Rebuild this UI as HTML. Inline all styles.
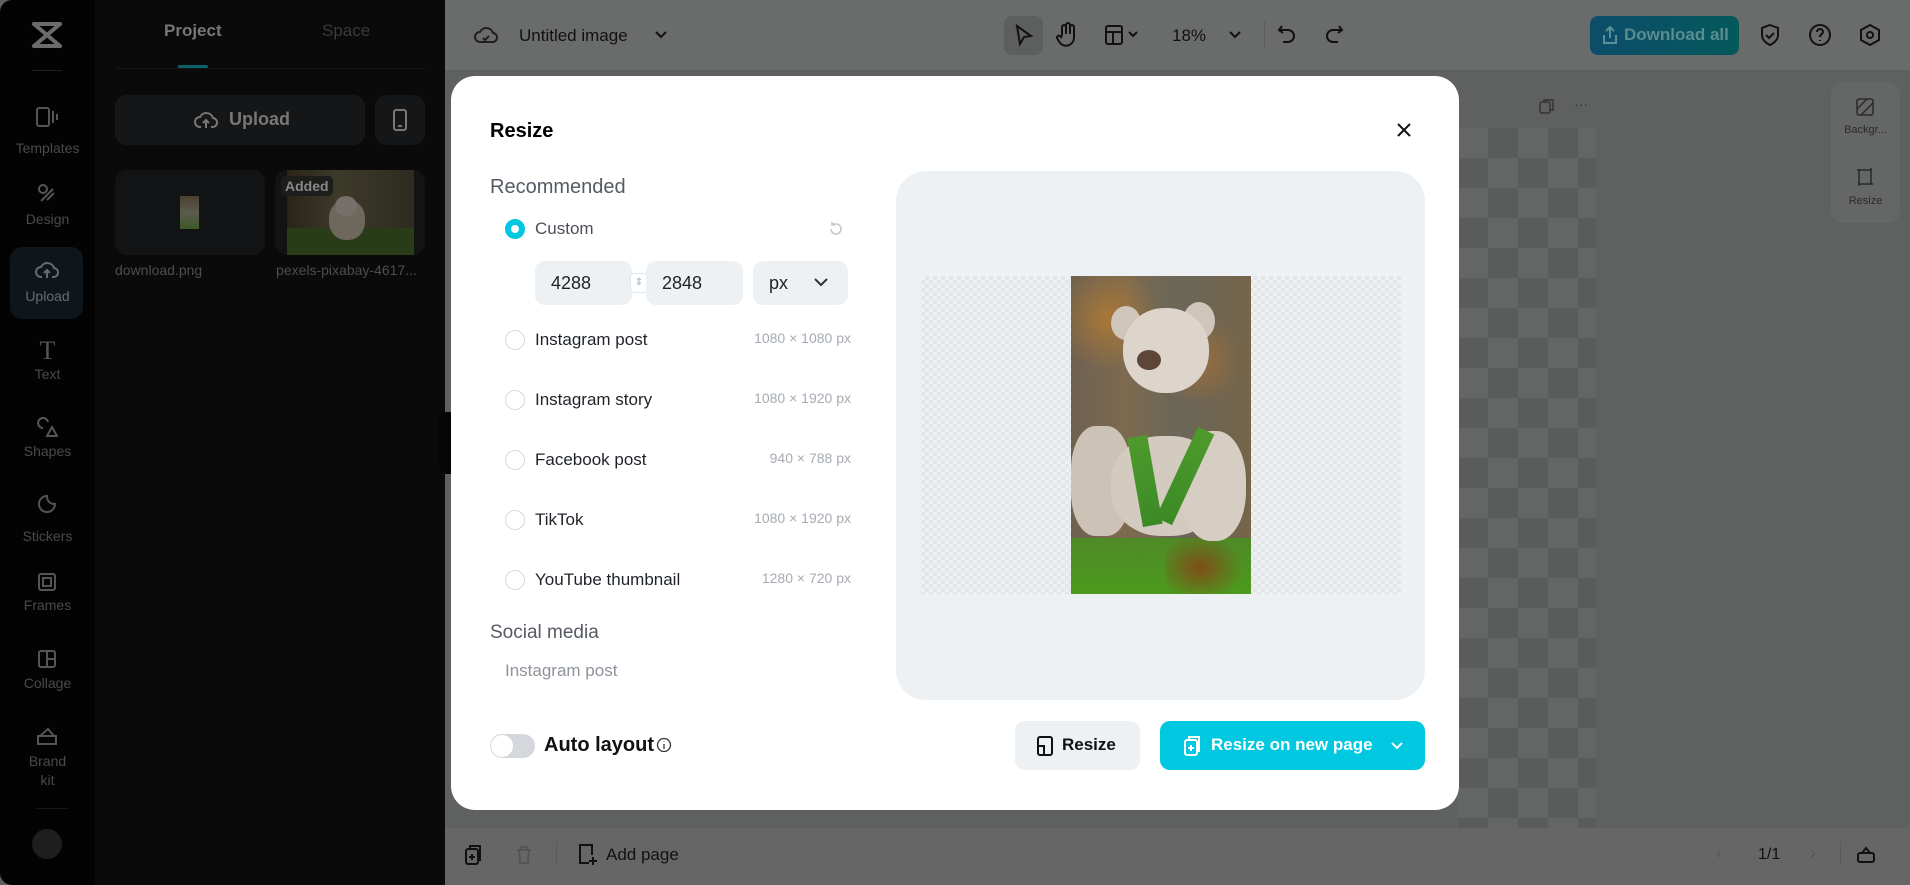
<!DOCTYPE html>
<html><head><meta charset="utf-8"><style>
*{box-sizing:border-box;margin:0;padding:0}
body{width:1910px;height:885px;overflow:hidden;background:#5f6060;font-family:"Liberation Sans",sans-serif;position:relative}
.a{position:absolute}
.rail{left:0;top:0;width:95px;height:885px;background:#030303;border-radius:12px 0 0 12px}
.panel{left:95px;top:0;width:350px;height:885px;background:#0a0a0a}
.ri{position:absolute;left:0;width:95px;text-align:center;color:#4a4a4a;font-size:14px}
.top{left:445px;top:0;width:1465px;height:70px;background:#6a6b6b}
.bot{left:445px;top:828px;width:1465px;height:57px;background:#666}
.ic{position:absolute}
.modal{left:451px;top:76px;width:1008px;height:734px;background:#fff;border-radius:24px}
.lbl{position:absolute;font-size:17px;color:#1f2329}
.rad{position:absolute;left:505px;width:20px;height:20px;border-radius:50%;border:1.5px solid #d5d9de}
.inp{position:absolute;top:261px;height:44px;background:#eef1f4;border-radius:10px;font-size:18px;color:#1f2329;line-height:44px;padding-left:16px}
.sz{position:absolute;left:700px;width:151px;text-align:right;font-size:14px;color:#a6abb3}
</style></head><body>
<div class="a rail"></div>
<div class="a panel"></div>
<svg class="ic" style="left:30px;top:20px" width="34" height="30" viewBox="0 0 34 30" fill="none" stroke="#6c6c6c" stroke-width="4" stroke-linecap="round"><path d="M4 4h26M4 26h26M4 4l26 22M30 4L4 26"/></svg>
<div class="a" style="left:32px;top:70px;width:30px;height:1px;background:#222"></div>
<svg class="ic" style="left:36px;top:106px" width="22" height="22" fill="none" stroke="#555" stroke-width="2"><rect x="1" y="2" width="12" height="18" rx="2"/><path d="M17 5v12M21 8v6"/></svg>
<div class="ri" style="top:140px">Templates</div>
<svg class="ic" style="left:37px;top:183px" width="20" height="20" fill="none" stroke="#555" stroke-width="2"><circle cx="6" cy="6" r="4"/><path d="M4 18l12-12M10 17l7-7"/></svg>
<div class="ri" style="top:211px">Design</div>
<div class="a" style="left:10px;top:247px;width:73px;height:72px;background:#0f161b;border-radius:12px"></div>
<svg class="ic" style="left:35px;top:260px" width="24" height="20" fill="none" stroke="#6a6a6a" stroke-width="2"><path d="M7 17H6a5 5 0 010-10 7 7 0 0113 1 4 4 0 01-1 9h-1M12 18v-8M9 13l3-3 3 3"/></svg>
<div class="ri" style="top:288px;color:#6a6a6a">Upload</div>
<div class="ri" style="top:336px;font-size:26px;font-family:'Liberation Serif',serif;color:#555">T</div>
<div class="ri" style="top:366px">Text</div>
<svg class="ic" style="left:36px;top:416px" width="22" height="22" fill="none" stroke="#555" stroke-width="2"><path d="M7 12a5 5 0 115-6M11 20l5-9 5 9z"/></svg>
<div class="ri" style="top:443px">Shapes</div>
<svg class="ic" style="left:36px;top:493px" width="22" height="22" fill="none" stroke="#555" stroke-width="2"><path d="M19 11a8 8 0 11-8-8c0 5 3 8 8 8z"/></svg>
<div class="ri" style="top:528px">Stickers</div>
<svg class="ic" style="left:37px;top:572px" width="20" height="20" fill="none" stroke="#555" stroke-width="2"><rect x="2" y="2" width="16" height="16" rx="2"/><rect x="6" y="6" width="8" height="8"/></svg>
<div class="ri" style="top:597px">Frames</div>
<svg class="ic" style="left:37px;top:649px" width="20" height="20" fill="none" stroke="#555" stroke-width="2"><rect x="2" y="2" width="16" height="16" rx="2"/><path d="M10 2v16M10 10h8"/></svg>
<div class="ri" style="top:675px">Collage</div>
<svg class="ic" style="left:36px;top:726px" width="22" height="20" fill="none" stroke="#555" stroke-width="2"><path d="M2 10h18v8H2zM4 10l8-7 6 7"/></svg>
<div class="ri" style="top:752px;line-height:19px">Brand<br>kit</div>
<div class="a" style="left:37px;top:808px;width:30px;height:1px;background:#1a1a1a"></div>
<div class="a" style="left:32px;top:829px;width:30px;height:30px;border-radius:50%;background:#1e1e1e"></div>
<div class="a" style="left:164px;top:21px;font-size:17px;font-weight:bold;color:#777">Project</div>
<div class="a" style="left:322px;top:21px;font-size:17px;color:#3a3a3a">Space</div>
<div class="a" style="left:115px;top:68px;width:310px;height:1px;background:#161616"></div>
<div class="a" style="left:178px;top:65px;width:30px;height:3px;border-radius:2px;background:#0b6168"></div>
<div class="a" style="left:115px;top:95px;width:250px;height:50px;border-radius:12px;background:#141618"></div>
<svg class="ic" style="left:194px;top:110px" width="24" height="20" fill="none" stroke="#777" stroke-width="2"><path d="M7 17H6a5 5 0 010-10 7 7 0 0113 1 4 4 0 01-1 9h-1M12 18v-8M9 13l3-3 3 3"/></svg>
<div class="a" style="left:229px;top:109px;font-size:18px;font-weight:bold;color:#777">Upload</div>
<div class="a" style="left:375px;top:95px;width:50px;height:50px;border-radius:12px;background:#141618"></div>
<svg class="ic" style="left:392px;top:108px" width="16" height="24" fill="none" stroke="#777" stroke-width="2"><rect x="2" y="2" width="12" height="20" rx="2"/><path d="M6 18h4"/></svg>
<div class="a" style="left:115px;top:170px;width:150px;height:85px;border-radius:12px;background:#111314"></div>
<div class="a" style="left:180px;top:196px;width:19px;height:33px;background:linear-gradient(#4a4030,#5c5a50 50%,#3c5a25)"></div>
<div class="a" style="left:275px;top:170px;width:150px;height:85px;border-radius:12px;background:#111314"></div>
<div class="a" style="left:287px;top:170px;width:127px;height:85px;background:linear-gradient(90deg,#2a2417,#3d3a2a 40%,#2e2b20);overflow:hidden">
<div class="a" style="left:0;top:58px;width:127px;height:27px;background:#283d17"></div>
<div class="a" style="left:42px;top:30px;width:36px;height:40px;border-radius:45%;background:#6d675c"></div>
<div class="a" style="left:48px;top:26px;width:22px;height:20px;border-radius:50%;background:#76706a"></div></div>
<div class="a" style="left:281px;top:176px;padding:2px 4px;background:#1d1d1b;border-radius:5px;font-size:14px;font-weight:bold;color:#888">Added</div>
<div class="a" style="left:115px;top:262px;font-size:14px;color:#4d4d4d">download.png</div>
<div class="a" style="left:276px;top:262px;font-size:14px;color:#4d4d4d">pexels-pixabay-4617...</div>
<div class="a" style="left:439px;top:412px;width:12px;height:62px;background:#050505;border-radius:8px 0 0 8px"></div>
<div class="a top"></div>
<svg class="ic" style="left:474px;top:25px" width="24" height="20" fill="none" stroke="#1e1e1e" stroke-width="2"><path d="M7 17H6a5 5 0 010-10 7 7 0 0113 1 4 4 0 01-1 9H7z"/><path d="M9 13l2 2 4-4"/></svg>
<div class="a" style="left:519px;top:26px;font-size:17px;color:#111">Untitled image</div>
<svg class="ic" style="left:654px;top:30px" width="14" height="10" fill="none" stroke="#111" stroke-width="2"><path d="M2 2l5 5 5-5"/></svg>
<div class="a" style="left:1004px;top:16px;width:39px;height:39px;border-radius:8px;background:#5d5e5e"></div>
<svg class="ic" style="left:1014px;top:24px" width="20" height="24" fill="none" stroke="#111" stroke-width="2"><path d="M3 2l14 10-7 1-4 7z"/></svg>
<svg class="ic" style="left:1055px;top:22px" width="24" height="26" fill="none" stroke="#111" stroke-width="2"><path d="M7 14V5a2 2 0 014 0v7V3a2 2 0 014 0v9V5a2 2 0 014 0v11a8 8 0 01-14 5l-3-5a2 2 0 013-2l2 2"/></svg>
<svg class="ic" style="left:1105px;top:24px" width="36" height="22" fill="none" stroke="#111" stroke-width="2"><rect x="1" y="2" width="16" height="18" rx="2"/><path d="M1 8h16M8 8v12M24 8l4 4 4-4"/></svg>
<div class="a" style="left:1172px;top:26px;font-size:17px;color:#111">18%</div>
<svg class="ic" style="left:1228px;top:30px" width="14" height="10" fill="none" stroke="#111" stroke-width="2"><path d="M2 2l5 5 5-5"/></svg>
<div class="a" style="left:1264px;top:22px;width:1px;height:26px;background:#5a5a5a"></div>
<svg class="ic" style="left:1277px;top:24px" width="20" height="22" fill="none" stroke="#111" stroke-width="2"><path d="M5 2L2 6l4 3M2 6h9a6 6 0 010 12H6"/></svg>
<svg class="ic" style="left:1324px;top:24px" width="20" height="22" fill="none" stroke="#111" stroke-width="2"><path d="M15 2l3 4-4 3M18 6H9a6 6 0 000 12h5"/></svg>
<div class="a" style="left:1590px;top:16px;width:149px;height:39px;border-radius:8px;background:linear-gradient(90deg,#0d4d6a,#04595b)"></div>
<svg class="ic" style="left:1602px;top:25px" width="16" height="20" fill="none" stroke="#5a8f95" stroke-width="2"><path d="M8 13V2M4 6l4-4 4 4M2 10v8h12v-8"/></svg>
<div class="a" style="left:1624px;top:25px;font-size:17px;font-weight:bold;color:#5a8c90">Download all</div>
<svg class="ic" style="left:1759px;top:23px" width="22" height="24" fill="none" stroke="#111" stroke-width="2"><path d="M11 2l8 3v7c0 5-4 8-8 10-4-2-8-5-8-10V5z"/><path d="M7 12l3 3 5-5"/></svg>
<svg class="ic" style="left:1808px;top:23px" width="24" height="24" fill="none" stroke="#111" stroke-width="2"><circle cx="12" cy="12" r="10"/><path d="M9 9a3 3 0 116 0c0 2-3 2-3 5M12 17v1"/></svg>
<svg class="ic" style="left:1858px;top:23px" width="24" height="24" fill="none" stroke="#111" stroke-width="2"><path d="M12 2l9 5v10l-9 5-9-5V7z"/><circle cx="12" cy="12" r="3"/></svg>
<div class="a" style="left:1458px;top:128px;width:138px;height:700px;background-image:conic-gradient(#5a5b5b 25%,#646565 0 50%,#5a5b5b 0 75%,#646565 0);background-size:60px 60px"></div>
<svg class="ic" style="left:1539px;top:98px" width="16" height="16" fill="none" stroke="#333" stroke-width="1.5"><rect x="1" y="4" width="10" height="11" rx="2"/><path d="M5 4V2h9v10h-3"/></svg>
<div class="a" style="left:1574px;top:96px;font-size:14px;color:#333">···</div>
<div class="a" style="left:1831px;top:82px;width:69px;height:141px;border-radius:12px;background:#656666"></div>
<svg class="ic" style="left:1855px;top:97px" width="20" height="20" fill="none" stroke="#2a2a2a" stroke-width="1.5"><rect x="2" y="2" width="16" height="16" rx="2"/><path d="M2 12l10-10M6 18l12-12"/></svg>
<div class="a" style="left:1831px;top:124px;width:69px;text-align:center;font-size:11px;color:#2a2a2a">Backgr...</div>
<svg class="ic" style="left:1856px;top:166px" width="18" height="22" fill="none" stroke="#2a2a2a" stroke-width="1.5"><rect x="3" y="4" width="12" height="14"/><path d="M1 4h4M13 18h4M15 2v4M3 16v4"/></svg>
<div class="a" style="left:1831px;top:195px;width:69px;text-align:center;font-size:11px;color:#2a2a2a">Resize</div>
<div class="a bot"></div>
<svg class="ic" style="left:464px;top:844px" width="20" height="22" fill="none" stroke="#111" stroke-width="2"><rect x="2" y="5" width="12" height="15" rx="2"/><path d="M6 5V2h10v14h-2M8 10v6M5 13h6"/></svg>
<svg class="ic" style="left:515px;top:845px" width="18" height="20" fill="none" stroke="#555" stroke-width="2"><path d="M2 5h14M6 5V2h6v3M4 5l1 13h8l1-13"/></svg>
<div class="a" style="left:556px;top:842px;width:1px;height:24px;background:#5a5a5a"></div>
<svg class="ic" style="left:577px;top:843px" width="22" height="24" fill="none" stroke="#111" stroke-width="2"><path d="M12 20H3V2h12v10M16 14v8M12 18h8"/></svg>
<div class="a" style="left:606px;top:845px;font-size:17px;color:#111">Add page</div>
<div class="a" style="left:1716px;top:843px;font-size:18px;color:#555">‹</div>
<div class="a" style="left:1758px;top:846px;font-size:16px;color:#111">1/1</div>
<div class="a" style="left:1810px;top:843px;font-size:18px;color:#555">›</div>
<div class="a" style="left:1840px;top:842px;width:1px;height:24px;background:#5a5a5a"></div>
<svg class="ic" style="left:1856px;top:845px" width="20" height="18" fill="none" stroke="#111" stroke-width="2"><rect x="2" y="8" width="16" height="9" rx="2"/><path d="M6 8l4-5 4 5"/></svg>
<div class="a modal"></div>
<div class="a" style="left:490px;top:120px;font-size:20px;font-weight:bold;color:#000">Resize</div>
<svg class="ic" style="left:1396px;top:122px" width="16" height="16" fill="none" stroke="#111" stroke-width="2"><path d="M2 2l12 12M14 2L2 14"/></svg>
<div class="a" style="left:490px;top:176px;font-size:20px;color:#555a63">Recommended</div>
<div class="a" style="left:505px;top:219px;width:20px;height:20px;border-radius:50%;border:6px solid #00c8e0;background:#fff"></div>
<div class="lbl" style="left:535px;top:219px;color:#4b5058">Custom</div>
<svg class="ic" style="left:828px;top:221px" width="16" height="16" fill="none" stroke="#c5c9ce" stroke-width="1.6"><path d="M3 8a5 5 0 105-5H4M4 1v3h3"/></svg>
<div class="inp" style="left:535px;width:97px">4288</div>
<div class="a" style="left:630px;top:273px;width:18px;height:20px;background:#fff;border-radius:4px;border:1px solid #e4e7ea;font-size:10px;color:#aaa;text-align:center;line-height:18px">⇕</div>
<div class="inp" style="left:646px;width:97px">2848</div>
<div class="inp" style="left:753px;width:95px">px</div>
<svg class="ic" style="left:813px;top:277px" width="16" height="10" fill="none" stroke="#333" stroke-width="2"><path d="M2 2l6 6 6-6"/></svg>
<div class="rad" style="top:330px"></div><div class="lbl" style="left:535px;top:330px">Instagram post</div><div class="sz" style="top:330px">1080 × 1080 px</div>
<div class="rad" style="top:390px"></div><div class="lbl" style="left:535px;top:390px">Instagram story</div><div class="sz" style="top:390px">1080 × 1920 px</div>
<div class="rad" style="top:450px"></div><div class="lbl" style="left:535px;top:450px">Facebook post</div><div class="sz" style="top:450px">940 × 788 px</div>
<div class="rad" style="top:510px"></div><div class="lbl" style="left:535px;top:510px">TikTok</div><div class="sz" style="top:510px">1080 × 1920 px</div>
<div class="rad" style="top:570px"></div><div class="lbl" style="left:535px;top:570px">YouTube thumbnail</div><div class="sz" style="top:570px">1280 × 720 px</div>
<div class="a" style="left:490px;top:622px;font-size:19px;color:#555a63">Social media</div>
<div class="a" style="left:505px;top:661px;font-size:17px;color:#8e939b">Instagram post</div>
<div class="a" style="left:896px;top:171px;width:529px;height:529px;border-radius:30px;background:#eef1f4"></div>
<div class="a" style="left:921px;top:276px;width:480px;height:318px;background-color:#eef0f2;background-image:conic-gradient(#e3e6e9 25%,transparent 0 50%,#e3e6e9 0 75%,transparent 0);background-size:8px 8px"></div>
<div class="a" style="left:1071px;top:276px;width:180px;height:318px;overflow:hidden;background:linear-gradient(90deg,#6e6150,#7d6a4f 30%,#6a6658 60%,#756449)">
<div class="a" style="left:0;top:0;width:180px;height:140px;background:radial-gradient(circle at 20% 30%,rgba(200,130,40,.6),transparent 30%),radial-gradient(circle at 70% 60%,rgba(200,120,40,.5),transparent 30%)"></div>
<div class="a" style="left:0;top:262px;width:180px;height:56px;background:linear-gradient(#4e8a26,#4c9a1e)"></div>
<div class="a" style="left:95px;top:252px;width:85px;height:66px;background:radial-gradient(ellipse at 40% 60%,rgba(140,60,20,.8),transparent 60%)"></div>
<div class="a" style="left:0;top:150px;width:60px;height:110px;border-radius:40%;background:#ccc2b6"></div>
<div class="a" style="left:40px;top:160px;width:110px;height:100px;border-radius:45%;background:#d4cbc0"></div>
<div class="a" style="left:110px;top:155px;width:65px;height:110px;border-radius:45%;background:#d6cec3"></div>
<div class="a" style="left:40px;top:30px;width:30px;height:34px;border-radius:50%;background:#cfc5b9"></div>
<div class="a" style="left:112px;top:26px;width:32px;height:38px;border-radius:50%;background:#cfc5b9"></div>
<div class="a" style="left:52px;top:32px;width:86px;height:85px;border-radius:48%;background:#ddd5cb"></div>
<div class="a" style="left:66px;top:74px;width:24px;height:20px;border-radius:50%;background:#5d4537"></div>
<div class="a" style="left:64px;top:160px;width:20px;height:90px;background:linear-gradient(#4e9a2c,#3c8a26);transform:rotate(-10deg)"></div>
<div class="a" style="left:105px;top:150px;width:18px;height:100px;background:linear-gradient(#4e9a2c,#3c8a26);transform:rotate(25deg)"></div>
</div>
<div class="a" style="left:490px;top:734px;width:45px;height:24px;border-radius:12px;background:#d4d8dd"></div>
<div class="a" style="left:491px;top:735px;width:22px;height:22px;border-radius:50%;background:#fff"></div>
<div class="a" style="left:544px;top:734px;font-size:20px;font-weight:bold;color:#111">Auto layout</div>
<svg class="ic" style="left:656px;top:737px" width="16" height="16" fill="none" stroke="#333" stroke-width="1.3"><circle cx="8" cy="8" r="6.5"/><path d="M8 7v5M8 4.5v.5"/></svg>
<div class="a" style="left:1015px;top:721px;width:125px;height:49px;border-radius:10px;background:#eef1f4"></div>
<svg class="ic" style="left:1036px;top:735px" width="18" height="22" fill="none" stroke="#111" stroke-width="2"><rect x="2" y="2" width="14" height="18" rx="2"/><path d="M2 11h6v9"/></svg>
<div class="a" style="left:1062px;top:735px;font-size:17px;font-weight:bold;color:#111">Resize</div>
<div class="a" style="left:1160px;top:721px;width:265px;height:49px;border-radius:10px;background:#00c8e0"></div>
<svg class="ic" style="left:1183px;top:734px" width="20" height="24" fill="none" stroke="#fff" stroke-width="2"><rect x="2" y="6" width="12" height="15" rx="2"/><path d="M6 6V3h10v14h-2M8 11v6M5 14h6"/></svg>
<div class="a" style="left:1211px;top:735px;font-size:17px;font-weight:bold;color:#fff">Resize on new page</div>
<svg class="ic" style="left:1390px;top:741px" width="14" height="10" fill="none" stroke="#fff" stroke-width="2"><path d="M2 2l5 5 5-5"/></svg>
</body></html>
